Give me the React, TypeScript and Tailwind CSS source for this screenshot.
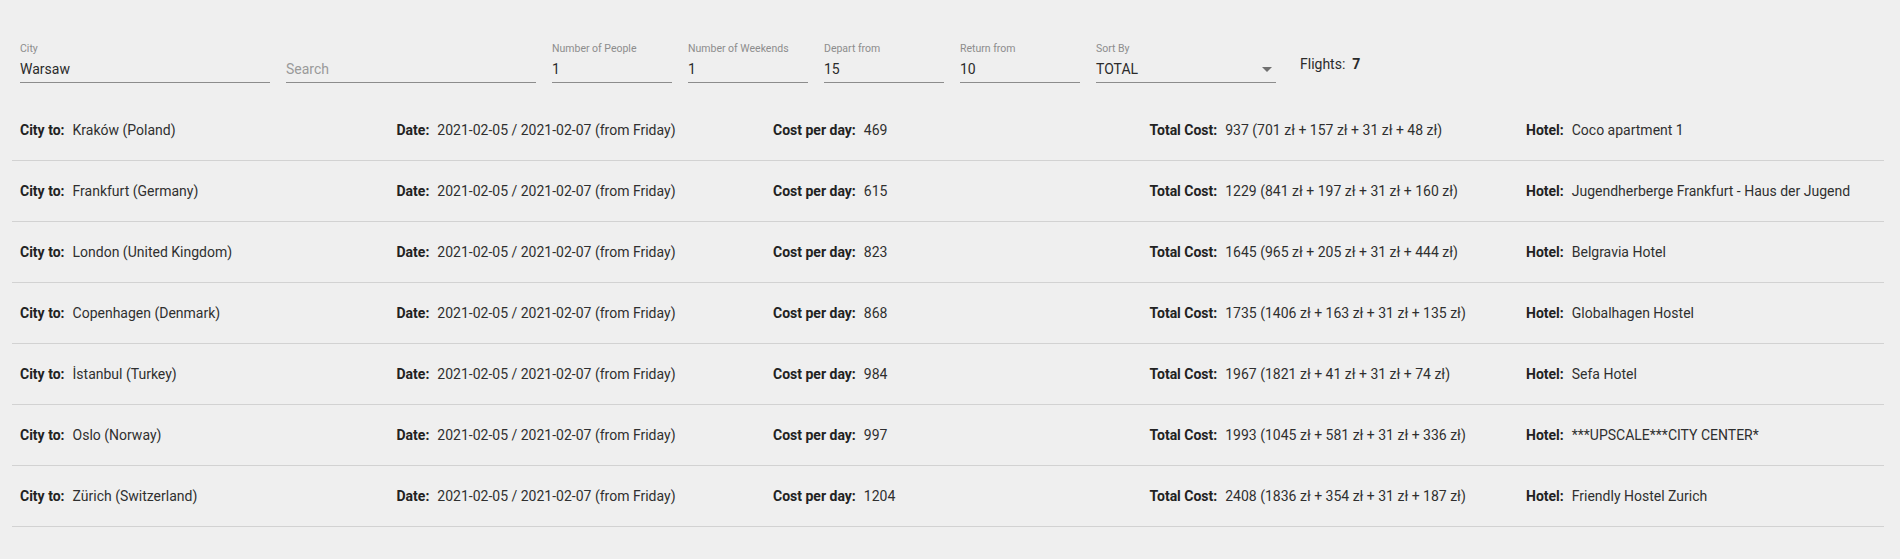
import React from "react";

type Trip = {
  city: string;
  perDay: number;
  total: string;
  hotel: string;
};

const trips: Trip[] = [
  { city: "Kraków (Poland)", perDay: 469, total: "937 (701 zł + 157 zł + 31 zł + 48 zł)", hotel: "Coco apartment 1" },
  { city: "Frankfurt (Germany)", perDay: 615, total: "1229 (841 zł + 197 zł + 31 zł + 160 zł)", hotel: "Jugendherberge Frankfurt - Haus der Jugend" },
  { city: "London (United Kingdom)", perDay: 823, total: "1645 (965 zł + 205 zł + 31 zł + 444 zł)", hotel: "Belgravia Hotel" },
  { city: "Copenhagen (Denmark)", perDay: 868, total: "1735 (1406 zł + 163 zł + 31 zł + 135 zł)", hotel: "Globalhagen Hostel" },
  { city: "İstanbul (Turkey)", perDay: 984, total: "1967 (1821 zł + 41 zł + 31 zł + 74 zł)", hotel: "Sefa Hotel" },
  { city: "Oslo (Norway)", perDay: 997, total: "1993 (1045 zł + 581 zł + 31 zł + 336 zł)", hotel: "***UPSCALE***CITY CENTER*" },
  { city: "Zürich (Switzerland)", perDay: 1204, total: "2408 (1836 zł + 354 zł + 31 zł + 187 zł)", hotel: "Friendly Hostel Zurich" },
];

function Field({ label, value, width, placeholder }: { label?: string; value?: string; width: string; placeholder?: string }) {
  return (
    <div className={`${width} flex flex-col`}>
      <span className="h-3 text-[10.5px] leading-3 text-[#8d8d8d]">{label ?? "\u00a0"}</span>
      <div className="mt-1 flex h-[24px] items-start border-b border-[#8c8c8c] text-[14px] leading-5">
        {value ? <span className="text-[#2b2b2b]">{value}</span> : <span className="text-[#9a9a9a]">{placeholder}</span>}
      </div>
    </div>
  );
}

function Cell({ label, value }: { label: string; value: React.ReactNode }) {
  return (
    <div className="flex items-center whitespace-nowrap">
      <span className="mr-2 font-bold text-[#222]">{label}</span>
      <span className="text-[#2f2f2f]">{value}</span>
    </div>
  );
}

export default function App() {
  return (
    <div className="min-h-[559px] bg-[#efefef] font-['Roboto',sans-serif] text-[14px] leading-5 text-[#2b2b2b]">
      {/* Filters */}
      <div className="flex gap-4 pl-5 pt-[43px]">
        <Field label="City" value="Warsaw" width="w-[250px]" />
        <Field placeholder="Search" width="w-[250px]" />
        <Field label="Number of People" value="1" width="w-[120px]" />
        <Field label="Number of Weekends" value="1" width="w-[120px]" />
        <Field label="Depart from" value="15" width="w-[120px]" />
        <Field label="Return from" value="10" width="w-[120px]" />
        <div className="relative">
          <Field label="Sort By" value="TOTAL" width="w-[180px]" />
          <svg className="absolute right-[-3px] top-[14px] h-6 w-6 text-[#707070]" viewBox="0 0 24 24" fill="currentColor">
            <path d="M7 10l5 5 5-5z" />
          </svg>
        </div>
        <div className="ml-2 mt-[11px] text-[#2b2b2b]">
          Flights:&nbsp; <span className="font-bold">7</span>
        </div>
      </div>

      {/* Results */}
      <div className="ml-3 mt-[17px] w-[1872px]">
        {trips.map((t) => (
          <div key={t.city} className="border-b border-[#d2d2d2]">
            <div className="grid h-[60px] grid-cols-[repeat(5,376.5px)] items-center px-2">
              <Cell label="City to:" value={t.city} />
              <Cell label="Date:" value="2021-02-05 / 2021-02-07 (from Friday)" />
              <Cell label="Cost per day:" value={t.perDay} />
              <Cell label="Total Cost:" value={t.total} />
              <Cell label="Hotel:" value={t.hotel} />
            </div>
          </div>
        ))}
      </div>
    </div>
  );
}
